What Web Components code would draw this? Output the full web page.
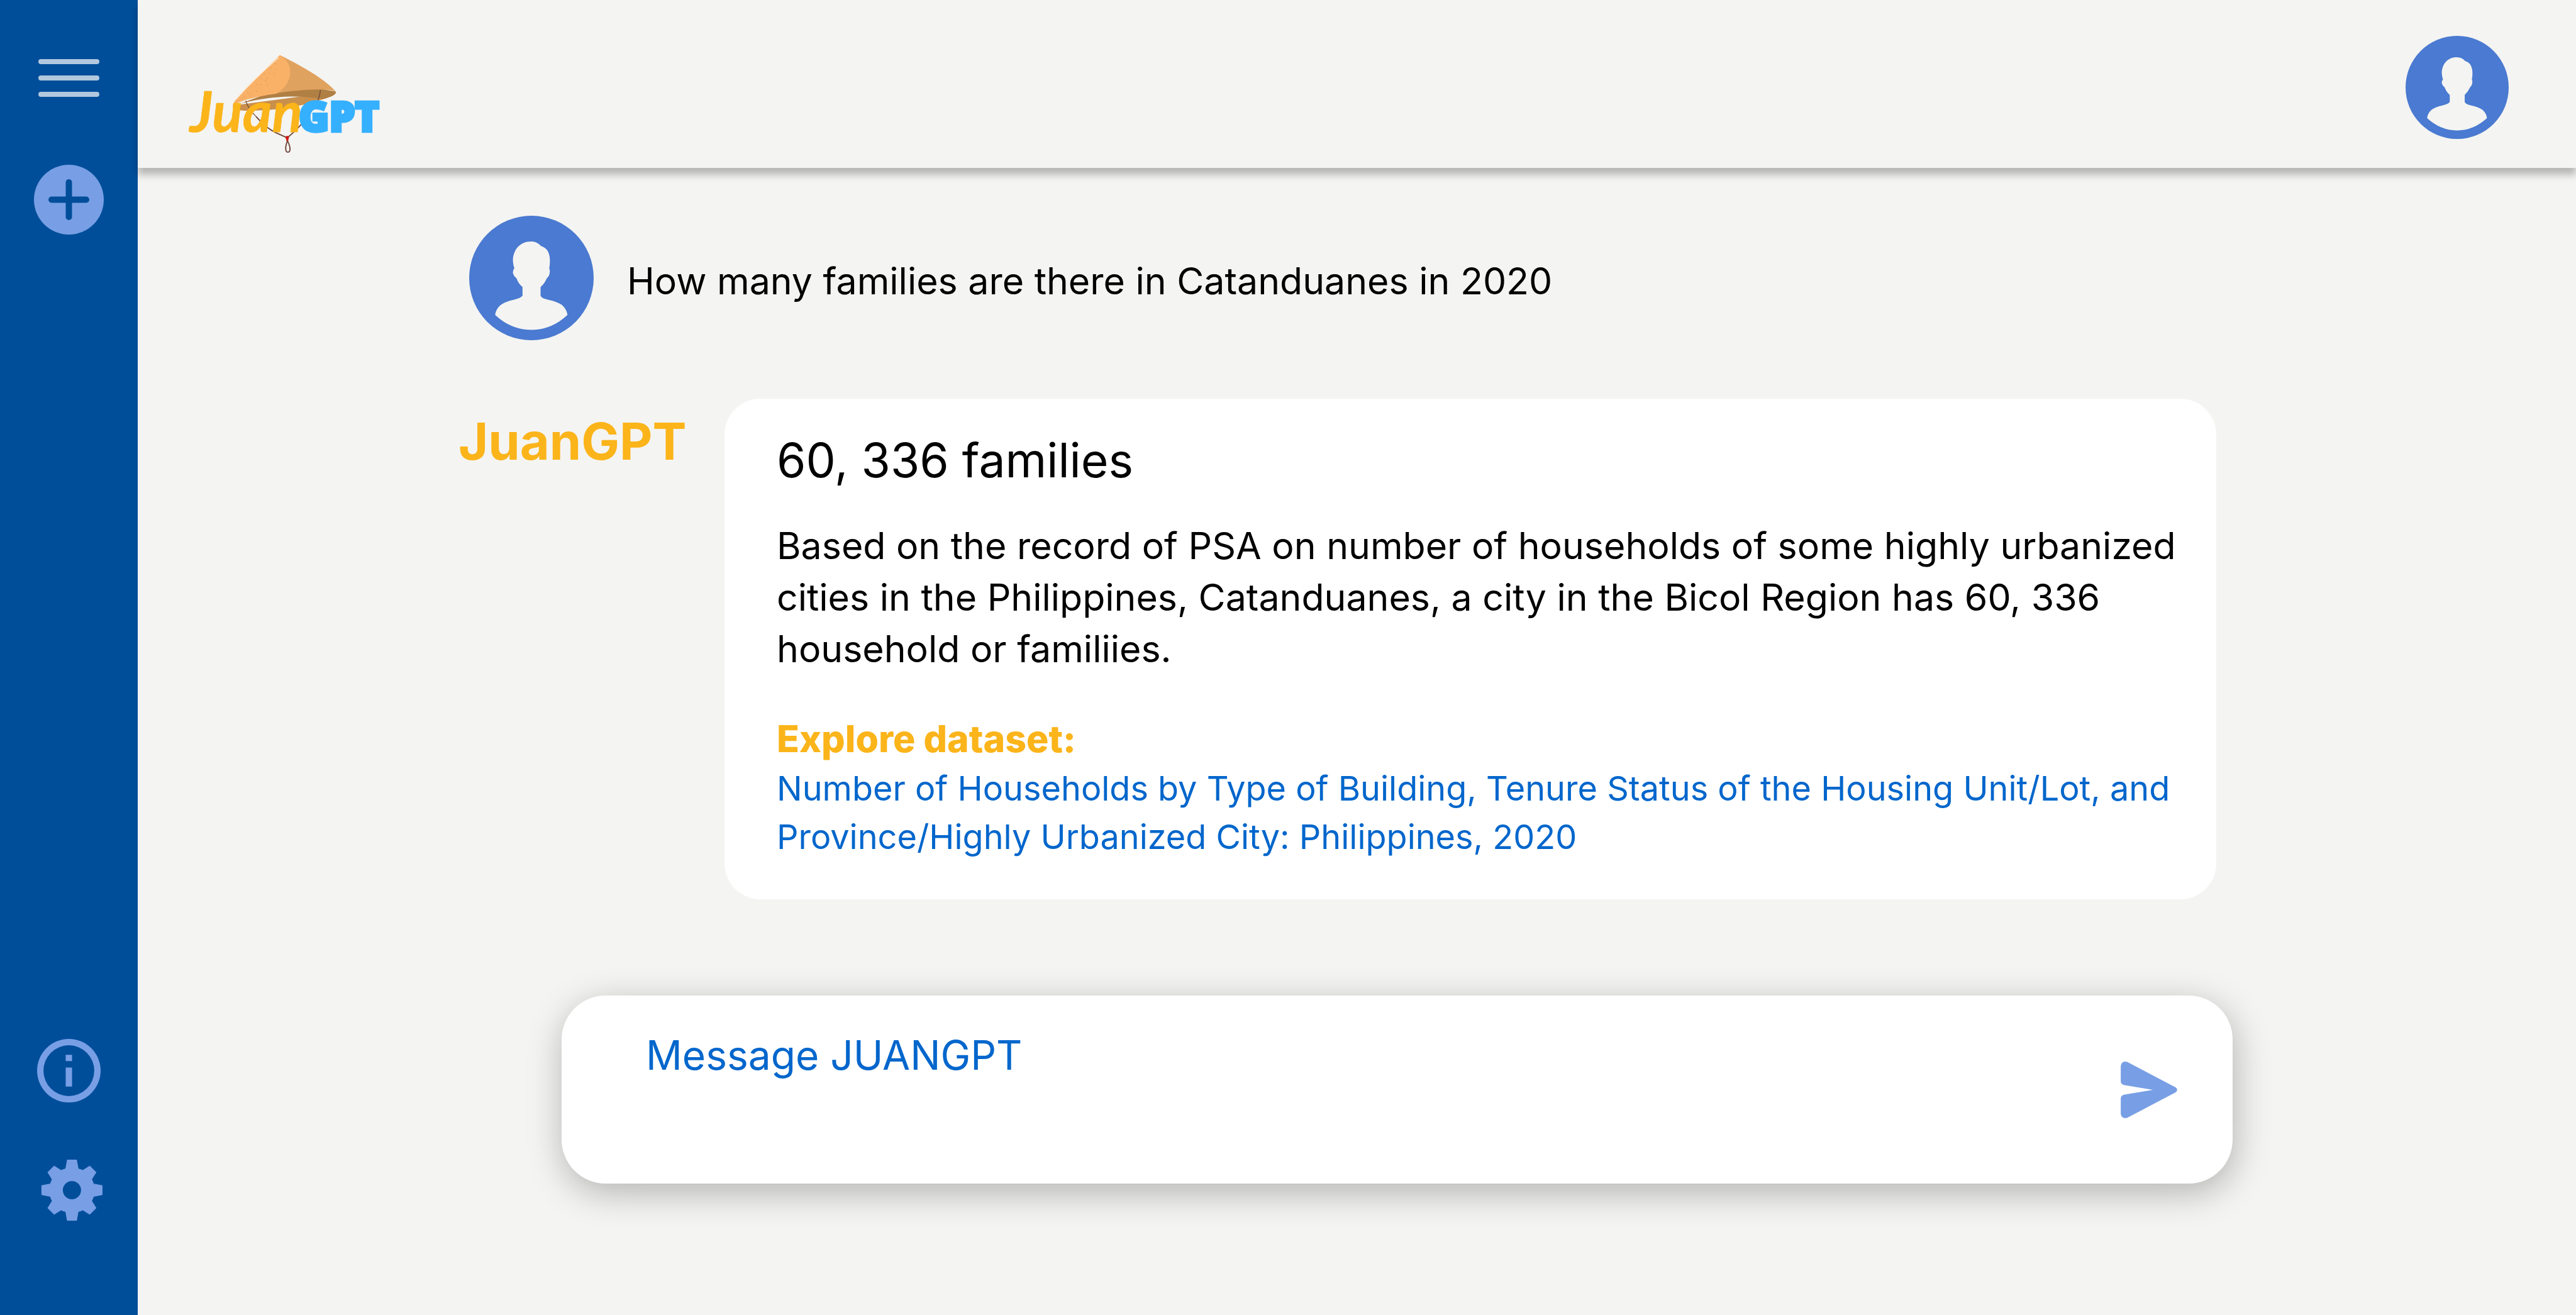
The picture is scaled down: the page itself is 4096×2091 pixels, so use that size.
<!DOCTYPE html>
<html lang="en">
<head>
<meta charset="utf-8">
<meta name="viewport" content="width=device-width, initial-scale=1">
<title>JuanGPT</title>
<style>
  :root {
    --page: #f4f4f2;
    --navy: #004e9a;
    --periwinkle: #789fe5;
    --avatar: #4a7ad1;
    --gold: #fbb41a;
    --link: #0066cc;
  }
  body {
    margin: 0;
    background: var(--page);
    color: #000;
    font-family: Inter, "Liberation Sans", sans-serif;
  }
</style>
</head>
<body>
<chat-app>
  <side-bar slot="side"></side-bar>
  <top-bar slot="top"></top-bar>
  <user-message>How many families are there in Catanduanes in 2020</user-message>
  <bot-message name="JuanGPT">
    <span slot="title">60, 336 families</span>
    Based on the record of PSA on number of households of some highly urbanized cities in the Philippines, Catanduanes, a city in the Bicol Region has 60, 336 household or familiies.
    <data-link slot="source" heading="Explore dataset:" href="#dataset">Number of Households by Type of Building, Tenure Status of the Housing Unit/Lot, and Province/Highly Urbanized City: Philippines, 2020</data-link>
  </bot-message>
  <message-box slot="composer" placeholder="Message JUANGPT"></message-box>
</chat-app>

<script>
class Base extends HTMLElement {
  constructor() {
    super();
    this.attachShadow({ mode: 'open' });
  }
  connectedCallback() {
    this.shadowRoot.innerHTML = `<style>
      *, *::before, *::after { box-sizing: border-box; }
      :host { display: block; }
      button { display: block; margin: 0; padding: 0; border: 0; background: none; color: inherit; cursor: pointer; }
      svg { display: block; }
    </style>` + this.render();
  }
}

customElements.define('chat-app', class extends Base {
  render() {
    return `<style>
      :host { display: grid; grid-template-columns: 219px minmax(0, 1fr); min-height: 100vh; }
      .body { display: flex; flex-direction: column; }
      main { display: flex; flex-direction: column; gap: 93px; padding: 76px 572px 0 510px; }
      footer { padding: 153px 546px 100px 674px; }
    </style>
    <slot name="side"></slot>
    <div class="body">
      <slot name="top"></slot>
      <main><slot></slot></main>
      <footer><slot name="composer"></slot></footer>
    </div>`;
  }
});

customElements.define('side-bar', class extends Base {
  render() {
    return `<style>
      :host { background: var(--navy); }
      nav { display: flex; flex-direction: column; align-items: center; height: 100%; padding: 94px 0 150px; color: var(--periwinkle); }
      .new { margin-top: 108px; }
      .info { margin-top: auto; }
      .settings { margin-top: 91px; }
    </style>
    <nav aria-label="Main">
      <button aria-label="Menu"><svg width="97" height="60" viewBox="0 0 97 60" stroke="#b2c8df" stroke-width="8" stroke-linecap="round"><path d="M4 4H93M4 30H93M4 56H93"/></svg></button>
      <button class="new" aria-label="New chat"><svg width="111" height="111" viewBox="0 0 111 111"><circle cx="55.5" cy="55.5" r="55.5" fill="currentColor"/><path d="M55.500 28V83M28 55.500H83" stroke="#004e9a" stroke-width="10" stroke-linecap="round"/></svg></button>
      <button class="info" aria-label="About"><svg width="101" height="101" viewBox="2 2 20 20" fill="currentColor"><path d="M11 7h2v2h-2zm0 4h2v6h-2zm1-9a10 10 0 1 0 0 20 10 10 0 0 0 0-20zm0 18a8 8 0 1 1 0-16 8 8 0 0 1 0 16z"/></svg></button>
      <button class="settings" aria-label="Settings"><svg width="107" height="97" viewBox="-185 -154 339 308">
        <path fill="currentColor" fill-rule="evenodd" stroke="currentColor" stroke-width="4" stroke-linejoin="round" d="M-23-152L23-152 31-108A112 112 0 0 1 55-99L90-121 121-90 99-55A112 112 0 0 1 108-31L152-23 152 23 108 31A112 112 0 0 1 99 55L121 90 90 121 55 99A112 112 0 0 1 31 108L23 152-23 152-31 108A112 112 0 0 1-55 99L-90 121-121 90-99 55A112 112 0 0 1-108 31L-152 23-152-23-108-31A112 112 0 0 1-99-55L-121-90-90-121-55-99A112 112 0 0 1-31-108ZM0-48A48 48 0 1 0 0 48 48 48 0 1 0 0-48Z"/></svg></button>
    </nav>`;
  }
});

customElements.define('user-avatar', class extends Base {
  render() {
    return `<style>
      :host { flex: none; width: var(--size); height: var(--size); }
      svg { width: 100%; height: 100%; }
    </style>
    <svg viewBox="103 92 518 518" role="img" aria-label="User">
      <circle cx="362" cy="351" r="259" fill="#4a7ad1"/>
      <path fill="#f4f4f2" d="M360 199C378 199 392 206 402 218C430 226 439 250 439 280Q439 298 436 311Q440 318 438 330Q436 344 426 352Q418 372 400 389V424Q404 436 430 441Q472 450 490 464Q509 482 512 505Q445 567 362 567Q278 567 211 505Q214 482 232 465Q250 450 290 441Q320 434 325 424V389Q306 372 300 352Q288 343 285 330Q284 318 291 311Q286 298 285 280C285 232 316 199 360 199Z"/>
    </svg>`;
  }
});

customElements.define('brand-logo', class extends Base {
  render() {
    return `<style>
      a { display: block; }
      .juan { font: italic 700 284px Lato, sans-serif; fill: var(--gold); stroke: var(--gold); stroke-width: 2px; }
      .gpt { font: 800 206px "Open Sans", sans-serif; fill: #35b0ff; stroke: #35b0ff; stroke-width: 14px; }
    </style>
    <a href="#home" aria-label="JuanGPT home">
    <svg width="310" height="161" viewBox="40 60 980 510">
      <path fill="#c98f4c" d="M272 322C266 338 290 348 345 348C470 350 610 330 722 291C770 277 792 268 789 254Z"/>
      <path fill="#b07f44" d="M272 325C360 292 520 268 650 280Q700 285 722 291C770 277 794 266 789 252L700 236 480 250Z"/>
      <path fill="#e0a25f" d="M508 69C600 115 725 180 789 252C770 243 740 241 700 241C560 243 430 268 340 292Q300 304 270 322C290 280 350 220 508 69Z"/>
      <path fill="#f9b168" d="M508 69C548 92 562 128 560 160C556 205 530 240 490 263Q410 274 340 292Q300 304 270 322C285 280 350 220 508 69Z"/>
      <path fill="none" stroke="#fff1df" stroke-width="4" stroke-linecap="round" d="M499 82C430 142 345 225 288 290"/>
      <path fill="none" stroke="#d9935a" stroke-width="3" d="M482 111l6 3M458 131l6 4M490 139l5 5M452 158l6 5M476 160l6 4M427 166l5-6M440 184l7 1M410 184l6 4M434 197l7-2M407 217l7 1M387 218l7-1M444 217l6 6M388 252l7-4M352 262l6-5M342 253l6 5M358 272l6 5M328 281l6-4M315 290l6-3"/>
      <path fill="none" stroke="#704638" stroke-width="4" d="M336 298Q346 336 388 378M712 244Q710 270 700 296Q672 350 640 388"/>
      <path fill="none" stroke="#704638" stroke-width="6" d="M388 378Q440 438 490 460L545 485M640 388Q600 440 545 485"/>
      <path fill="none" stroke="#704638" stroke-width="6" d="M546 500C534 530 534 557 548 557C564 557 562 530 546 500Z"/>
      <path fill="#d01818" d="M536 480Q545 470 554 480Q554 488 551 491V500H540V492Q535 488 536 480Z"/>
      <text class="juan" x="54" y="456">Juan</text>
      <text class="gpt" x="604" y="452">GPT</text>
    </svg></a>`;
  }
});

customElements.define('top-bar', class extends Base {
  render() {
    return `<style>
      :host { background: var(--page); box-shadow: 0 11px 11px rgba(0, 0, 0, .25); }
      header { display: flex; justify-content: space-between; align-items: flex-start; padding: 57px 107px 21px 78px; }
      brand-logo { margin-top: 28px; }
      user-avatar { --size: 164px; }
    </style>
    <header><brand-logo></brand-logo><button aria-label="Account"><user-avatar></user-avatar></button></header>`;
  }
});

customElements.define('user-message', class extends Base {
  render() {
    return `<style>
      :host { display: flex; align-items: center; gap: 53px; padding-left: 17px; }
      user-avatar { --size: 198px; }
      p { margin: 0; padding-top: 10px; font-size: 59px; line-height: 74px; }
    </style>
    <user-avatar></user-avatar><p><slot></slot></p>`;
  }
});

customElements.define('bot-message', class extends Base {
  render() {
    return `<style>
      :host { display: grid; grid-template-columns: 423px minmax(0, 1fr); align-items: start; }
      .name { padding-top: 18px; font-size: 81px; font-weight: 700; line-height: 100px; color: var(--gold); }
      article { display: flex; flex-direction: column; padding: 53px 48px 61px 83px; background: #fff; border-radius: 57px; }
      h2 { margin: 0 0 50px; font-size: 75px; font-weight: 400; line-height: 90px; }
      p { margin: 0 0 62px; font-size: 59px; line-height: 82px; }
    </style>
    <div class="name">${this.getAttribute('name')}</div>
    <article>
      <h2><slot name="title"></slot></h2>
      <p><slot></slot></p>
      <slot name="source"></slot>
    </article>`;
  }
});

customElements.define('data-link', class extends Base {
  render() {
    return `<style>
      h3 { margin: 0; font-size: 59px; font-weight: 800; line-height: 80px; color: var(--gold); }
      a { display: block; font-size: 54px; line-height: 77px; color: var(--link); text-decoration: none; }
    </style>
    <h3>${this.getAttribute('heading')}</h3>
    <a href="${this.getAttribute('href')}"><slot></slot></a>`;
  }
});

customElements.define('message-box', class extends Base {
  render() {
    const hint = this.getAttribute('placeholder');
    return `<style>
      form { display: flex; align-items: center; gap: 60px; min-height: 299px; padding: 55px 88px 55px 134px; background: #fff; border-radius: 70px; box-shadow: 3px 14px 56px rgba(0, 0, 0, .27); }
      textarea { flex: 1; align-self: stretch; min-width: 0; padding: 0; border: 0; outline: 0; resize: none; background: none; font: 400 64px/80px Inter, "Liberation Sans", sans-serif; color: var(--link); }
      textarea::placeholder { color: var(--link); opacity: 1; }
    </style>
    <form onsubmit="return false">
      <textarea aria-label="${hint}" placeholder="${hint}" rows="2"></textarea>
      <button aria-label="Send"><svg width="90" height="90" viewBox="471 424 282 283" fill="#789fe5"><path d="M471 447Q473 425 494 424Q503 424 512 430L745 553Q753 558 753 565.500Q753 573 745 578L512 701Q503 707 494 707Q473 706 471 685V608Q472 592 490 589L632 565.500 490 542Q472 539 471 522Z"/></svg></button>
    </form>`;
  }
});
</script>
</body>
</html>
